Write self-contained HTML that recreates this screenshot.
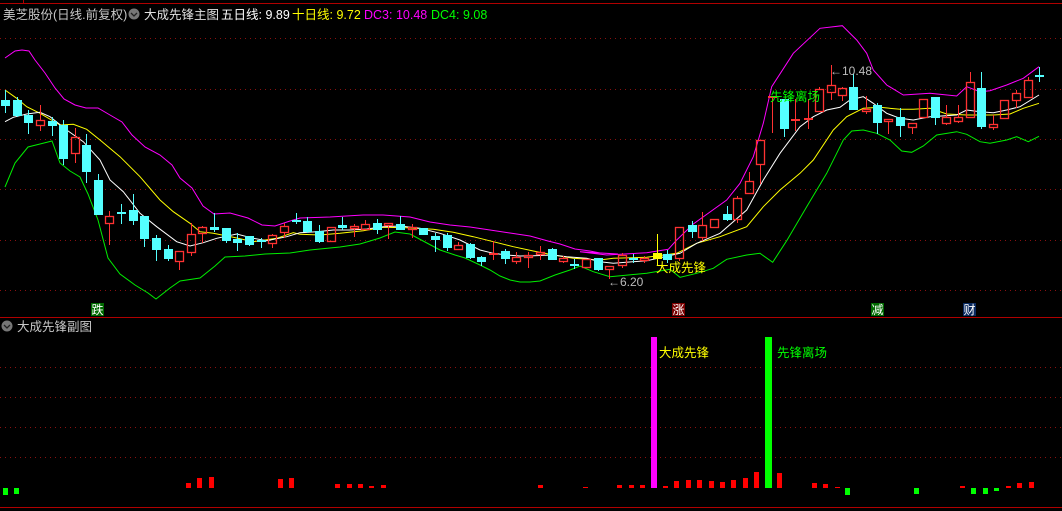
<!DOCTYPE html>
<html><head><meta charset="utf-8"><style>
html,body{margin:0;padding:0;background:#000;width:1062px;height:511px;overflow:hidden}
svg{display:block}
text{font-family:"Liberation Sans","Noto Sans CJK SC",sans-serif}
</style></head><body>
<svg id="s" width="1062" height="511" xmlns="http://www.w3.org/2000/svg">
<rect width="1062" height="511" fill="#000"/>
<line x1="0" y1="3.5" x2="1062" y2="3.5" stroke="#b00000"/>
<line x1="23.5" y1="0" x2="23.5" y2="3" stroke="#b00000"/>
<g stroke="#8a1010" stroke-dasharray="1,4">
<line x1="0" y1="38.5" x2="1062" y2="38.5"/><line x1="0" y1="89.5" x2="1062" y2="89.5"/>
<line x1="0" y1="139.5" x2="1062" y2="139.5"/><line x1="0" y1="189.5" x2="1062" y2="189.5"/>
<line x1="0" y1="240.5" x2="1062" y2="240.5"/><line x1="0" y1="290.5" x2="1062" y2="290.5"/>
<line x1="0" y1="367.5" x2="1062" y2="367.5"/><line x1="0" y1="397.5" x2="1062" y2="397.5"/>
<line x1="0" y1="427.5" x2="1062" y2="427.5"/><line x1="0" y1="457.5" x2="1062" y2="457.5"/>
</g>
<line x1="0" y1="317.5" x2="1062" y2="317.5" stroke="#b00000"/>
<line x1="0" y1="507.5" x2="1062" y2="507.5" stroke="#b00000"/>
<g id="lines" fill="none" stroke-width="1"></g>
<g id="cand"></g>
<g id="bars"></g>
<text x="3" y="19" font-size="12.5" fill="#c8c8c8">美芝股份(日线.前复权)</text>
<circle cx="134" cy="14" r="5.5" fill="#777"/><path d="M131 13 l3 3 l3 -3" stroke="#222" fill="none" stroke-width="1.3"/>
<text x="144" y="19" font-size="12.5" fill="#e0e0e0">大成先锋主图</text>
<text x="221" y="19" font-size="12.5" fill="#fff">五日线: 9.89</text>
<text x="292" y="19" font-size="12.5" fill="#ffff00">十日线: 9.72</text>
<text x="364" y="19" font-size="12.5" fill="#ff00ff">DC3: 10.48</text>
<text x="431" y="19" font-size="12.5" fill="#00ff00">DC4: 9.08</text>
<circle cx="7" cy="326" r="5.5" fill="#777"/><path d="M4 325 l3 3 l3 -3" stroke="#222" fill="none" stroke-width="1.3"/>
<text x="17" y="331" font-size="12.5" fill="#c8c8c8">大成先锋副图</text>
<text x="656" y="272" font-size="12.5" fill="#ffff00">大成先锋</text>
<text x="770" y="101" font-size="12.5" fill="#00ff00">先锋离场</text>
<text x="608" y="286" font-size="12" fill="#bbb">←6.20</text>
<text x="830" y="75" font-size="12" fill="#bbb">←10.48</text>
<text x="659" y="357" font-size="12.5" fill="#ffff00">大成先锋</text>
<text x="777" y="357" font-size="12.5" fill="#00ff00">先锋离场</text>
<rect x="91" y="303" width="13" height="13" fill="#006a00"/><text x="91.5" y="314" font-size="12" fill="#fff">跌</text>
<rect x="672" y="303" width="13" height="13" fill="#7a0000"/><text x="672.5" y="314" font-size="12" fill="#fff">涨</text>
<rect x="871" y="303" width="13" height="13" fill="#006a00"/><text x="871.5" y="314" font-size="12" fill="#fff">减</text>
<rect x="963" y="303" width="13" height="13" fill="#0a2a60"/><text x="963.5" y="314" font-size="12" fill="#fff">财</text>
</svg>
<script>
var NS="http://www.w3.org/2000/svg";
function el(p,t,a){var e=document.createElementNS(NS,t);for(var k in a)e.setAttribute(k,a[k]);p.appendChild(e);return e;}
function pl(pts,c,sx,sy,ox,oy){var s=[];for(var i=0;i<pts.length;i+=2)s.push((pts[i]/sx+ox).toFixed(1)+","+(pts[i+1]/sy+oy).toFixed(1));return s;}
var L=document.getElementById("lines");
function line(arr,c){el(L,"polyline",{points:arr.join(" "),stroke:c});}
// magenta
var mag=[5,58,15,51,22,50,29,51,35,60,45,73,55,88,64,99,75,105,86,108,98,108,110,115,122,122,132,135,145,147,160,155,172,165,180,178,192,188,203,206,214,214,230,213,248,218,262,225,275,226,290,221,300,218,330,217,363,215,383,215,410,217,430,222,450,225,470,227,490,230,510,233,530,236,548,241,560,244,575,249,590,251,600,253,618,254];
var magZ=[0,695,80,705,200,698,265,688,290,660,340,612,440,540,480,490,520,410,550,310,575,200,640,100,720,25,787,17,830,60,860,100,880,150,920,195,970,225,1050,220,1130,228,1160,200,1200,215,1230,212,1280,195,1330,175,1377,140];
line(pl(mag,0,1,1,0,0).concat(pl(magZ,0,3,3,580,20)),"#ff00ff");
var grn=[5,187,15,163,28,147,40,144,52,141,60,163,70,171,80,177,88,194,98,220,108,258,120,274,135,285,148,293,156,299,170,288,180,281,200,278,215,266,225,257,245,256,265,254,290,253,310,250,340,247,360,244,380,238,395,232,410,234,425,242,440,250,455,255,465,258,480,265,490,270,500,276,510,280,520,282,530,282,540,281,555,275,570,270];
var grnZ=[0,738,40,755,90,770,200,760,270,748,300,772,350,760,400,745,440,718,500,705,540,700,578,727,620,662,680,560,740,460,770,400,790,360,815,333,850,330,890,340,930,360,965,393,995,397,1030,378,1070,345,1130,335,1160,343,1200,365,1230,370,1280,360,1310,350,1345,365,1377,349];
line(pl(grn,0,1,1,0,0).concat(pl(grnZ,0,3,3,580,20)),"#00ee00");
var yA=[15,150,50,175,80,200,120,220,180,255,220,253,260,268,300,300,360,350,420,410,480,480,520,515,570,550,600,575,640,580,700,592,760,605,830,595,880,578];
var yB=[0,133,60,135,120,130,190,122,250,112,320,113,400,118,460,127,520,140,580,155,640,170,700,183,760,195,820,205,900,210];
var yC=[100,715,200,712,290,700,350,670,420,650,500,620,550,560,600,510,660,460,700,420,760,330,800,290,850,265,900,262,960,268,1000,268,1050,265,1100,282,1160,285,1240,285,1290,282,1330,265,1377,250];
line(pl(yA,0,3,3,0,40).concat(pl(yB,0,3,3,300,190),pl(yC,0,3,3,580,20)),"#ffff00");
var wA=[15,245,40,232,80,222,120,217,150,230,200,270,250,305,300,360,330,420,370,455,420,520,470,560,530,605,570,618,610,608,650,595,710,582,760,595,800,602,860,590];
var wB=[0,128,50,125,100,120,150,120,200,117,250,110,300,108,360,115,420,130,480,150,540,180,580,190,620,195,660,198,700,197,760,195,800,200,860,205,900,215];
var wC=[100,730,200,722,300,700,350,670,420,640,500,570,550,480,600,400,660,320,700,290,740,270,780,262,810,240,850,230,880,250,920,280,960,295,1000,300,1050,290,1130,285,1160,270,1200,275,1240,278,1280,270,1320,260,1377,225];
line(pl(wA,0,3,3,0,40).concat(pl(wB,0,3,3,300,190),pl(wC,0,3,3,580,20)),"#ffffff");
// candles: x, bodyTop, bodyBot, hi, lo, type (c=cyan,r=red,y=yellow)
var C=[[5,100,105,90,112,'c'],[17,100,115,97,116,'c'],[28,115,122,110,133,'c'],[40,120,125,105,130,'r'],[52,121,125,117,135,'c'],[63,125,158,120,164,'c'],[75,137,153,128,162,'r'],[86,145,171,134,182,'c'],[98,180,214,174,214,'c'],[109,216,223,211,244,'r'],[121,212,213,204,223,'c'],[133,210,220,194,224,'c'],[144,216,238,216,246,'c'],[156,238,249,235,260,'c'],[168,249,258,245,260,'c'],[179,251,261,251,269,'r'],[191,234,252,223,255,'r'],[202,227,233,226,242,'r'],[214,227,229,213,231,'c'],[226,228,240,228,242,'c'],[237,239,242,233,250,'c'],[249,236,244,236,245,'c'],[261,240,241,238,247,'c'],[272,235,243,234,247,'r'],[284,226,232,223,237,'r'],[296,220,221,213,223,'c'],[307,221,231,217,232,'c'],[319,231,241,225,242,'c'],[331,227,241,227,241,'r'],[342,225,227,217,229,'c'],[354,226,228,224,236,'r'],[365,224,229,220,229,'r'],[377,223,229,219,233,'c'],[388,223,225,223,238,'r'],[400,224,229,216,229,'c'],[412,227,229,224,237,'r'],[423,228,234,228,234,'c'],[435,236,239,233,251,'c'],[447,235,247,233,250,'c'],[458,245,249,242,249,'r'],[470,244,257,243,258,'c'],[481,257,261,256,265,'c'],[493,253,254,241,259,'r'],[505,251,258,249,263,'c'],[516,257,261,252,263,'r'],[528,255,257,252,267,'r'],[540,252,254,246,259,'r'],[552,249,259,248,259,'c'],[563,258,261,256,262,'r'],[574,264,265,259,268,'c'],[586,259,267,259,267,'r'],[598,258,269,258,270,'c'],[609,266,269,266,278,'r'],[622,255,265,253,267,'r'],[633,258,259,254,262,'c'],[644,258,260,256,262,'r'],[657,253,258,234,265,'y'],[667,254,259,250,262,'c'],[679,227,258,227,260,'r'],[692,225,231,221,237,'c'],[702,225,237,212,240,'r'],[714,219,227,219,227,'r'],[727,214,219,206,220,'c'],[737,198,219,196,222,'r'],[749,181,193,172,193,'r'],[760,140,164,140,183,'r'],[772,96,97,96,132,'r'],[784,99,128,99,136,'c'],[795,119,120,99,130,'r'],[808,118,119,99,128,'r'],[819,89,111,87,111,'r'],[831,85,92,65,99,'r'],[842,88,95,87,100,'r'],[853,87,109,74,109,'c'],[866,109,111,96,113,'r'],[877,105,122,103,133,'c'],[888,119,121,119,133,'r'],[900,117,125,108,136,'c'],[912,123,127,123,133,'r'],[923,99,117,99,117,'r'],[935,97,117,97,124,'c'],[946,117,123,105,124,'r'],[958,117,121,105,122,'r'],[970,82,117,72,117,'r'],[981,88,126,72,128,'c'],[993,124,127,115,129,'r'],[1004,100,118,100,118,'r'],[1016,93,100,90,107,'r'],[1028,80,97,77,97,'r'],[1039,75,76,67,81,'c']];
var G=document.getElementById("cand");
C.forEach(function(c){var x=c[0],col=c[5]=='c'?'#54ffff':(c[5]=='y'?'#ffff00':'#ff3232');
 var bt=c[1],bb=c[2];
 el(G,"line",{x1:x+0.5,y1:c[3],x2:x+0.5,y2:bt,stroke:col});
 el(G,"line",{x1:x+0.5,y1:bb+1,x2:x+0.5,y2:c[4]+1,stroke:col});
 if(bb-bt<2){el(G,"rect",{x:x-4,y:bt,width:9,height:2,fill:col});}
 else if(c[5]=='r'){el(G,"rect",{x:x-3.5,y:bt+0.5,width:8,height:bb-bt,fill:"none",stroke:col,"stroke-width":1.3});}
 else el(G,"rect",{x:x-4,y:bt,width:9,height:bb-bt+1,fill:col});
});
// lower bars: x, height (+ red up, - green down)
var B=[[3,-7,'g'],[14,-6,'g'],[186,5],[197,10],[209,11],[278,9],[289,10],[335,4],[347,4],[358,4],[369,2],[381,3],[538,3],[583,1],[617,3],[629,3],[640,3],[663,2],[674,7],[686,8],[697,8],[709,7],[720,6],[731,8],[743,10],[754,16],[777,15],[812,5],[823,4],[835,1],[845,-7,'g'],[914,-6,'g'],[960,2],[971,-6,'g'],[983,-6,'g'],[994,-3,'g'],[1006,2],[1017,5],[1029,6]];
var BB=document.getElementById("bars");
B.forEach(function(b){if(b[1]>0)el(BB,"rect",{x:b[0],y:488-b[1],width:5,height:b[1],fill:"#ff0000"});else el(BB,"rect",{x:b[0],y:488,width:5,height:-b[1],fill:"#00ff00"});});
el(BB,"rect",{x:651,y:337,width:6,height:151,fill:"#ff00ff"});
el(BB,"rect",{x:765,y:337,width:7,height:151,fill:"#00ff00"});
</script>
</body></html>
